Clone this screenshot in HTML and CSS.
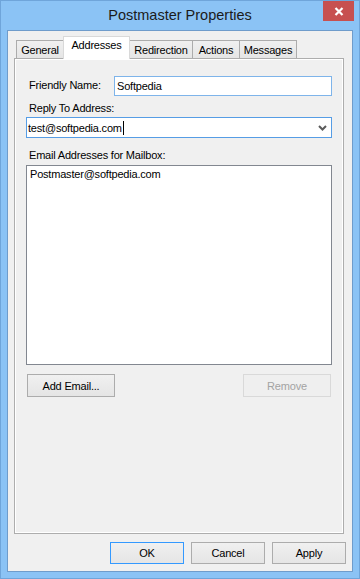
FILE: index.html
```html
<!DOCTYPE html>
<html>
<head>
<meta charset="utf-8">
<link rel="stylesheet" href="styles.css">
</head>
<body>
<div class="window">
  <div class="titlebar">
    <span class="title">Postmaster Properties</span>
    <div class="close">
      <svg width="10" height="9" viewBox="0 0 10 9"><path d="M1.5 1 L8.5 8 M8.5 1 L1.5 8" stroke="#fff" stroke-width="2.2" fill="none"/></svg>
    </div>
  </div>
  <div class="client">
    <div class="tabs">
      <div class="tab t-general">General</div>
      <div class="tab active t-addr">Addresses</div>
      <div class="tab t-redir">Redirection</div>
      <div class="tab t-actions">Actions</div>
      <div class="tab t-msg">Messages</div>
    </div>
    <div class="panel">
      <div class="row-friendly">
        <span class="lbl-inline">Friendly Name:</span>
        <div class="input friendly">Softpedia</div>
      </div>
      <div class="lbl lbl-reply">Reply To Address:</div>
      <div class="combo">
        <span class="combo-text">test@softpedia.com</span><span class="caret"></span>
        <svg class="arrow" width="9" height="6" viewBox="0 0 9 6"><path d="M1 1 L4.5 4.5 L8 1" stroke="#5b5b5b" stroke-width="2" fill="none"/></svg>
      </div>
      <div class="lbl lbl-email">Email Addresses for Mailbox:</div>
      <div class="list">
        <div class="item">Postmaster@softpedia.com</div>
      </div>
      <div class="btn-row">
        <div class="btn">Add Email...</div>
        <div class="btn disabled">Remove</div>
      </div>
    </div>
    <div class="footer">
      <div class="btn fbtn default">OK</div>
      <div class="btn fbtn">Cancel</div>
      <div class="btn fbtn">Apply</div>
    </div>
  </div>
</div>
</body>
</html>
```
FILE: styles.css
```css
* { box-sizing: border-box; }
html, body { margin: 0; padding: 0; }
body {
  width: 360px;
  height: 579px;
  overflow: hidden;
  font-family: "Liberation Sans", Arial, sans-serif;
  font-size: 11px;
  letter-spacing: -0.2px;
  color: #000;
  background: #8bc3f5;
}
.window {
  width: 360px;
  height: 579px;
  border: 1px solid #6fa5da;
  background: #8bc3f5;
  padding: 0 6px 6px 6px;
  display: flex;
  flex-direction: column;
}
.titlebar {
  height: 29px;
  position: relative;
  display: flex;
  align-items: center;
  justify-content: center;
}
.title {
  font-size: 14.5px;
  letter-spacing: 0;
  color: #1b1b1b;
  margin-top: -1px;
}
.close {
  position: absolute;
  top: 0;
  right: -1px;
  width: 31px;
  height: 20px;
  background: #c75050;
  display: flex;
  align-items: center;
  justify-content: center;
}
.client {
  width: 346px;
  height: 542px;
  border: 1px solid #6f9ccb;
  background: #f0f0f0;
  display: flex;
  flex-direction: column;
}
.tabs {
  height: 27px;
  display: flex;
  align-items: flex-end;
  padding-left: 8px;
}
.tab {
  height: 18px;
  border: 1px solid #acacac;
  border-bottom: none;
  background: linear-gradient(#f0f0f0, #e5e5e5);
  display: flex;
  align-items: center;
  justify-content: center;
  margin-right: -1px;
}
.tab.active {
  height: 23px;
  margin-bottom: -1px;
  background: #fff;
  border-color: #d9d9d9;
  position: relative;
  z-index: 1;
  align-items: flex-start;
  padding-top: 2px;
}
.t-general { width: 48px; }
.t-addr { width: 67px; }
.t-redir { width: 64px; }
.t-actions { width: 48px; }
.t-msg { width: 58px; }

.panel {
  margin: 0 8px 0 6px;
  height: 476px;
  border: 1px solid #adadad;
  box-shadow: inset 0 0 0 1px #fff;
  padding: 17px 11px 0 11px;
  display: flex;
  flex-direction: column;
}
.row-friendly {
  display: flex;
  align-items: center;
  height: 20px;
}
.lbl-inline {
  margin-left: 3px;
  width: 85px;
  margin-top: -3px;
}
.input {
  flex: 1;
  height: 20px;
  background: #fff;
  border: 1px solid #7eb4ea;
  padding-left: 2px;
  display: flex;
  align-items: center;
}
.lbl {
  height: 15px;
  line-height: 15px;
  margin-left: 3px;
}
.lbl-reply { margin-top: 5px; }
.combo {
  margin-top: 1px;
  height: 21px;
  background: #fff;
  border: 1px solid #569de5;
  display: flex;
  align-items: center;
  padding-left: 1px;
}
.caret {
  width: 1px;
  height: 14px;
  background: #000;
  margin-left: 1px;
}
.arrow {
  margin-left: auto;
  margin-right: 4px;
  margin-top: 1px;
}
.lbl-email { margin-top: 10px; }
.list {
  margin-top: 2px;
  height: 200px;
  background: #fff;
  border: 1px solid #828790;
  padding: 1px 0 0 3px;
}
.item {
  line-height: 14px;
}
.btn-row {
  margin-top: 9px;
  display: flex;
  justify-content: space-between;
  padding: 0 1px;
}
.btn {
  width: 88px;
  height: 23px;
  border: 1px solid #acacac;
  background: linear-gradient(#f0f0f0, #e5e5e5);
  display: flex;
  align-items: center;
  justify-content: center;
}
.btn.disabled {
  border-color: #d9d9d9;
  background: #efefef;
  color: #a3a3a3;
}
.footer {
  margin-top: 8px;
  display: flex;
  justify-content: flex-end;
  gap: 7px;
  padding-right: 6px;
}
.fbtn {
  width: 74px;
  height: 22px;
}
.btn.default {
  border-color: #3399ff;
}
```
